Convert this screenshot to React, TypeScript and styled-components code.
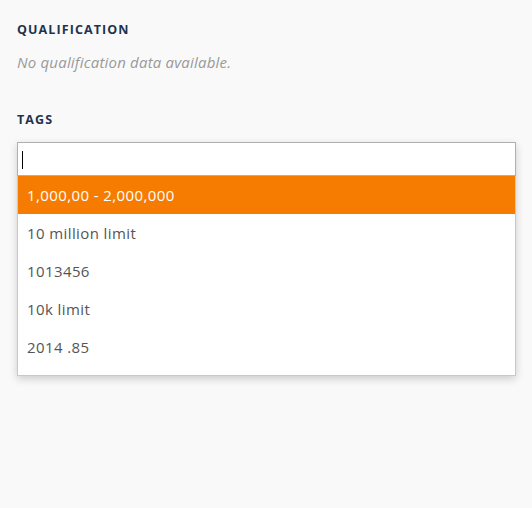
import React from 'react';
import styled, { createGlobalStyle } from 'styled-components';

const GlobalStyle = createGlobalStyle`
    * {
        box-sizing: border-box;
    }
    body {
        margin: 0;
        background: #f9f9f9;
        font-family: "Open Sans", Lato, sans-serif;
    }
`;

const Page = styled.div`
    display: flex;
    flex-direction: column;
    padding: 22px 16px 0 17px;
    height: 508px;
`;

const Section = styled.section`
    display: flex;
    flex-direction: column;
    margin-bottom: 40px;
`;

const Heading = styled.h3`
    margin: 0 0 14px;
    font-size: 12.5px;
    line-height: 16px;
    font-weight: 700;
    letter-spacing: 1.1px;
    color: #1d3451;
    text-transform: uppercase;
`;

const Empty = styled.p`
    margin: 0;
    font-size: 15px;
    line-height: 20px;
    letter-spacing: 0.2px;
    font-style: italic;
    color: #999;
`;

const Combo = styled.div`
    display: flex;
    flex-direction: column;
    box-shadow: 0 3px 8px rgba(0, 0, 0, 0.18);
    background: #fff;
`;

const Field = styled.div`
    position: relative;
    display: flex;
`;

const Input = styled.input`
    flex: 1;
    height: 34px;
    border: 1px solid #b0b0b0;
    padding: 0 6px;
    font-size: 15px;
    font-family: inherit;
    outline: none;
    background: #fff;
`;

const Caret = styled.span`
    position: absolute;
    left: 5px;
    top: 9px;
    width: 1px;
    height: 18px;
    background: #000;
`;

const Options = styled.ul`
    list-style: none;
    margin: 0;
    padding: 0 0 9px;
    border: 1px solid #c9c9c9;
    border-top: none;
`;

const Option = styled.li<{ $active?: boolean }>`
    display: flex;
    align-items: center;
    height: 38px;
    padding: 0 9px;
    font-size: 15px;
    letter-spacing: 0.4px;
    color: ${(p) => (p.$active ? '#fff' : '#555')};
    background: ${(p) => (p.$active ? '#f57c00' : 'transparent')};
`;

const tags = ['1,000,00 - 2,000,000', '10 million limit', '1013456', '10k limit', '2014 .85'];

export default function App() {
    return (
        <>
            <GlobalStyle />
            <Page>
                <Section>
                    <Heading>Qualification</Heading>
                    <Empty>No qualification data available.</Empty>
                </Section>
                <Section>
                    <Heading>Tags</Heading>
                    <Combo>
                        <Field>
                            <Input />
                            <Caret />
                        </Field>
                        <Options>
                            {tags.map((tag, i) => (
                                <Option key={tag} $active={i === 0}>
                                    {tag}
                                </Option>
                            ))}
                        </Options>
                    </Combo>
                </Section>
            </Page>
        </>
    );
}
